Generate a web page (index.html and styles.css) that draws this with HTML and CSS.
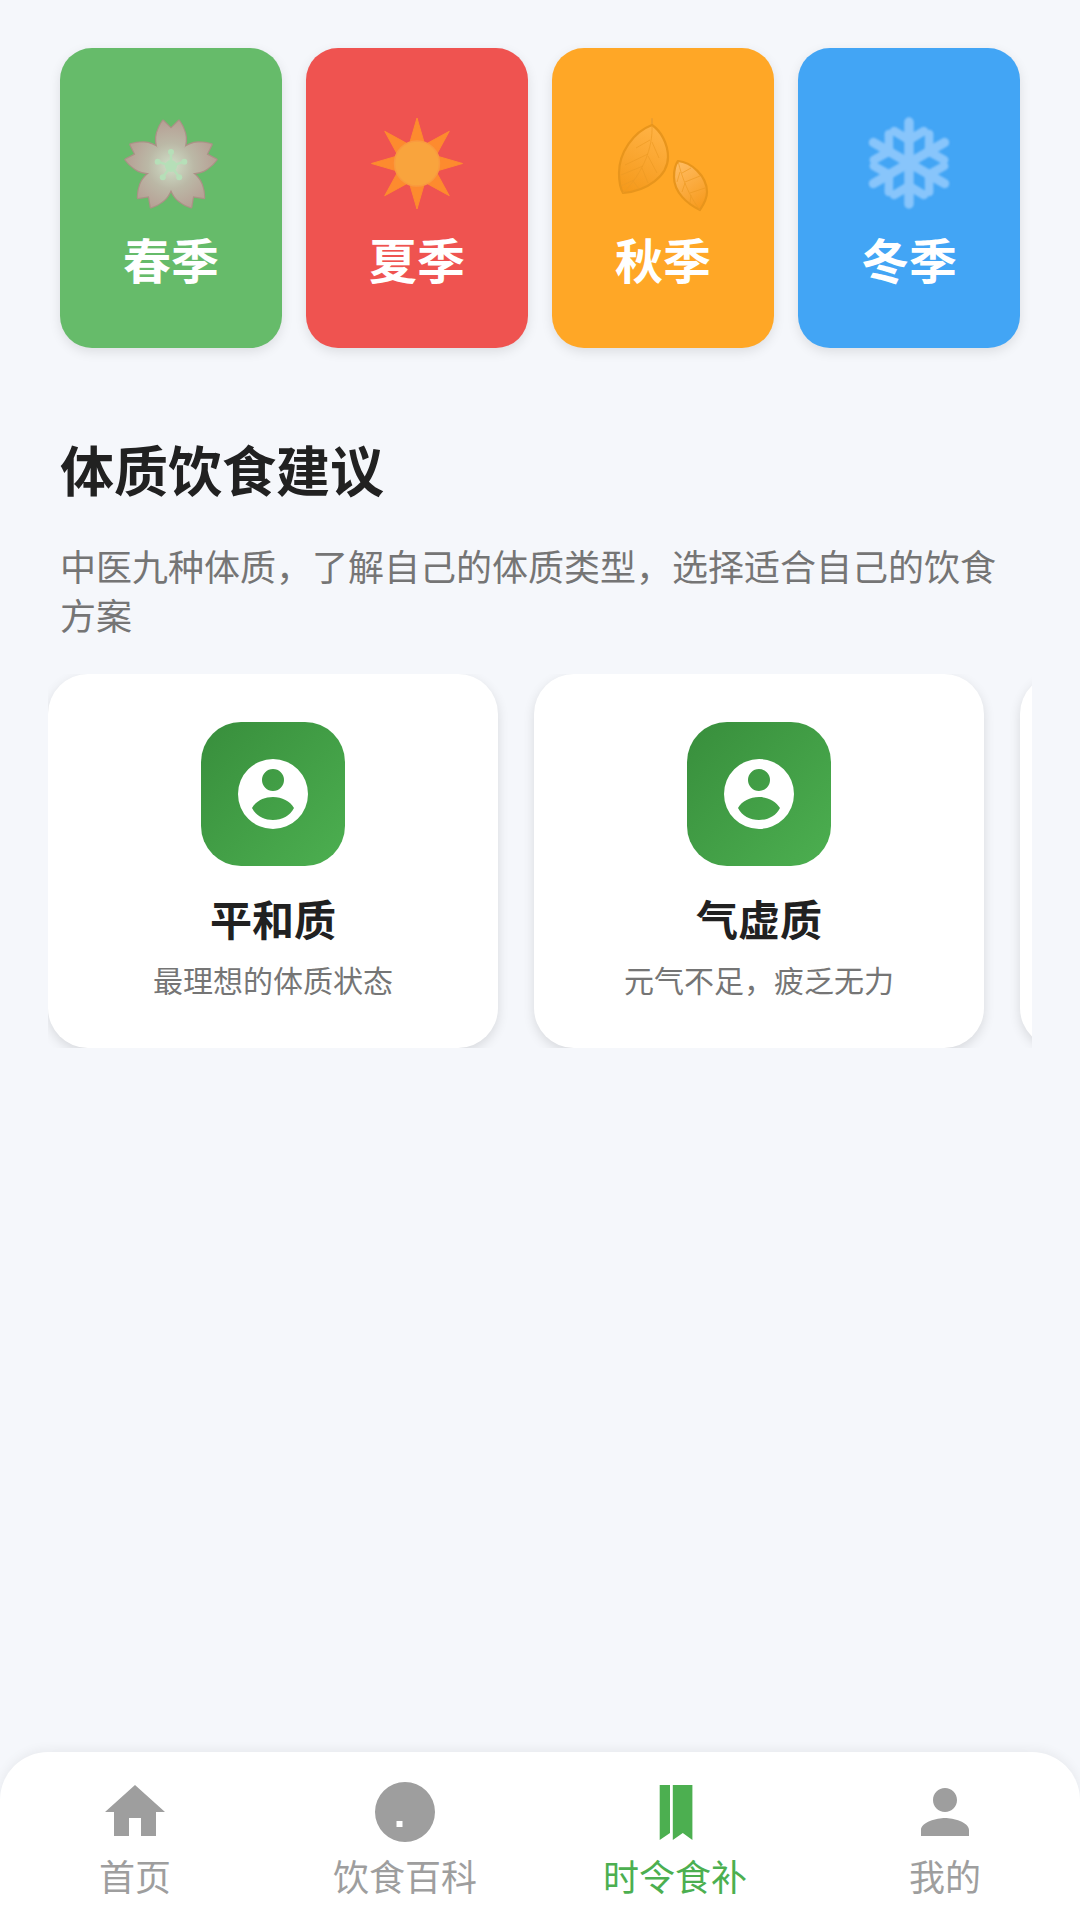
FILE: index.html
```html
<!DOCTYPE html>
<html lang="zh-CN">
<head>
<meta charset="utf-8">
<title>时令食补</title>
<link rel="stylesheet" href="styles.css">
</head>
<body>
<main class="content">
  <section class="seasons">
    <div class="season season-spring">
      <svg class="season-icon" viewBox="-48 -48 96 96" aria-hidden="true">
        <defs>
          <radialGradient id="petal" gradientUnits="userSpaceOnUse" cx="0" cy="0" r="46">
            <stop offset="0" stop-color="#cfe0c8"/><stop offset="0.5" stop-color="#bbb8a6"/><stop offset="1" stop-color="#b69f94"/>
          </radialGradient>
          <path id="p" d="M0 0L-12.5 -15.5C-15 -21 -15.5 -28 -14 -33C-12.5 -38 -10.5 -42 -8 -45.3L0 -37.5L8 -45.3C10.5 -42 12.5 -38 14 -33C15.5 -28 15 -21 12.5 -15.5Z"/>
        </defs>
        <g class="petal-edges">
          <use href="#p"/><use href="#p" transform="rotate(72)"/><use href="#p" transform="rotate(144)"/><use href="#p" transform="rotate(216)"/><use href="#p" transform="rotate(288)"/>
        </g>
        <g class="petals">
          <use href="#p"/><use href="#p" transform="rotate(72)"/><use href="#p" transform="rotate(144)"/><use href="#p" transform="rotate(216)"/><use href="#p" transform="rotate(288)"/>
        </g>
        <g class="stamens">
          <path d="M0 0L0 -14M0 0L13.3 -4.3M0 0L8.2 11.3M0 0L-8.2 11.3M0 0L-13.3 -4.3"/>
          <circle r="6"/><circle cy="-14" r="3"/><circle cx="13.3" cy="-4.3" r="3"/><circle cx="8.2" cy="11.3" r="3"/><circle cx="-8.2" cy="11.3" r="3"/><circle cx="-13.3" cy="-4.3" r="3"/>
        </g>
      </svg>
      <span class="season-name">春季</span>
    </div>
    <div class="season season-summer">
      <svg class="season-icon" viewBox="-48 -45.5 96 96" aria-hidden="true">
        <g class="rays">
          <path d="M-8 -18L0 -45.5L8 -18Z"/>
          <path d="M-8 -18L0 -45.5L8 -18Z" transform="rotate(45)"/>
          <path d="M-8 -18L0 -45.5L8 -18Z" transform="rotate(90)"/>
          <path d="M-8 -18L0 -45.5L8 -18Z" transform="rotate(135)"/>
          <path d="M-8 -18L0 -45.5L8 -18Z" transform="rotate(180)"/>
          <path d="M-8 -18L0 -45.5L8 -18Z" transform="rotate(225)"/>
          <path d="M-8 -18L0 -45.5L8 -18Z" transform="rotate(270)"/>
          <path d="M-8 -18L0 -45.5L8 -18Z" transform="rotate(315)"/>
        </g>
        <circle class="sun-disc" r="22.5"/>
      </svg>
      <span class="season-name">夏季</span>
    </div>
    <div class="season season-autumn">
      <svg class="season-icon" viewBox="0 0 96 96" aria-hidden="true">
        <defs>
          <linearGradient id="leaf-a" x1="0.6" y1="0" x2="0.3" y2="1"><stop offset="0" stop-color="#ffb244"/><stop offset="1" stop-color="#f59a1c"/></linearGradient>
          <linearGradient id="leaf-b" x1="0.2" y1="0" x2="0.7" y2="1"><stop offset="0" stop-color="#ffbc62"/><stop offset="1" stop-color="#f79b1e"/></linearGradient>
        </defs>
        <path class="leaf-stem" d="M37 8V1"/>
        <path class="leaf leaf-big" d="M37 7C46 13 53 26 53 39C53 58 32 73 8 75C4 68 4 60 4 55C4 35 18 14 37 7Z"/>
        <path class="leaf-vein" d="M37 7C38 30 28 55 8 75M35 22L21 30M33 36L10 47M28 48L6 57M19 62L6 68M37 24L44 40M33 38L42 55M27 50L33 65M18 63L24 71"/>
        <path class="leaf leaf-small" d="M63 43C76 44 92 58 92 74C92 80 89 86 85 92C72 86 59 74 59 59C59 52 60 47 63 43Z"/>
        <path class="leaf-vein" d="M63 43C67 60 74 78 85 92M67 55L76 50M70 64L85 58M75 75L90 70M65 54L62 64M70 65L67 74M76 77L75 85"/>
      </svg>
      <span class="season-name">秋季</span>
    </div>
    <div class="season season-winter">
      <svg class="season-icon" viewBox="-48 -45 96 96" aria-hidden="true">
        <g class="flake">
          <g><path d="M0 0V-41"/><path class="branch" d="M0 -23L-15 -32M0 -23L15 -32"/></g>
          <g transform="rotate(60)"><path d="M0 0V-41"/><path class="branch" d="M0 -23L-15 -32M0 -23L15 -32"/></g>
          <g transform="rotate(120)"><path d="M0 0V-41"/><path class="branch" d="M0 -23L-15 -32M0 -23L15 -32"/></g>
          <g transform="rotate(180)"><path d="M0 0V-41"/><path class="branch" d="M0 -23L-15 -32M0 -23L15 -32"/></g>
          <g transform="rotate(240)"><path d="M0 0V-41"/><path class="branch" d="M0 -23L-15 -32M0 -23L15 -32"/></g>
          <g transform="rotate(300)"><path d="M0 0V-41"/><path class="branch" d="M0 -23L-15 -32M0 -23L15 -32"/></g>
        </g>
      </svg>
      <span class="season-name">冬季</span>
    </div>
  </section>

  <section class="advice">
    <h2 class="advice-title">体质饮食建议</h2>
    <p class="advice-desc">中医九种体质，了解自己的体质类型，选择适合自己的饮食方案</p>
  </section>

  <section class="types">
    <article class="type-card">
      <div class="type-icon">
        <svg viewBox="0 0 70 70" aria-hidden="true">
          <path class="type-glyph" fill-rule="evenodd" d="M35 0A35 35 0 1 0 35 70A35 35 0 1 0 35 0ZM35 10A11 11 0 1 1 35 32A11 11 0 1 1 35 10ZM14 49C18 42 26 38 35 38C44 38 52 42 56 49C52 57 44 61 35 61C26 61 18 57 14 49Z"/>
        </svg>
      </div>
      <h3 class="type-name">平和质</h3>
      <p class="type-desc">最理想的体质状态</p>
    </article>
    <article class="type-card">
      <div class="type-icon">
        <svg viewBox="0 0 70 70" aria-hidden="true">
          <path class="type-glyph" fill-rule="evenodd" d="M35 0A35 35 0 1 0 35 70A35 35 0 1 0 35 0ZM35 10A11 11 0 1 1 35 32A11 11 0 1 1 35 10ZM14 49C18 42 26 38 35 38C44 38 52 42 56 49C52 57 44 61 35 61C26 61 18 57 14 49Z"/>
        </svg>
      </div>
      <h3 class="type-name">气虚质</h3>
      <p class="type-desc">元气不足，疲乏无力</p>
    </article>
    <article class="type-card"></article>
  </section>
</main>

<nav class="tabbar">
  <a class="tab">
    <svg class="tab-icon" viewBox="0 0 24 24" aria-hidden="true"><path d="M10 20v-6h4v6h5v-8h3L12 3 2 12h3v8z"/></svg>
    <span class="tab-label">首页</span>
  </a>
  <a class="tab">
    <svg class="tab-icon" viewBox="0 0 72 72" aria-hidden="true"><path fill-rule="evenodd" d="M36 6A30 30 0 1 0 36 66A30 30 0 1 0 36 6ZM27.5 45V51H33.5V45Z"/></svg>
    <span class="tab-label">饮食百科</span>
  </a>
  <a class="tab tab-active">
    <svg class="tab-icon" viewBox="0 0 72 72" aria-hidden="true"><path d="M20.7 9H31V57L20.7 64ZM33.8 9H53.4V64L43.8 57L33.8 64Z"/></svg>
    <span class="tab-label">时令食补</span>
  </a>
  <a class="tab">
    <svg class="tab-icon" viewBox="0 0 24 24" aria-hidden="true"><path d="M12 12c2.21 0 4-1.79 4-4s-1.79-4-4-4-4 1.79-4 4 1.79 4 4 4zm0 2c-2.67 0-8 1.34-8 4v2h16v-2c0-2.66-5.33-4-8-4z"/></svg>
    <span class="tab-label">我的</span>
  </a>
</nav>
</body>
</html>
```
FILE: styles.css
```css
* { box-sizing: border-box; }

html, body { margin: 0; padding: 0; }

body {
  width: 1080px;
  height: 1920px;
  display: flex;
  flex-direction: column;
  overflow: hidden;
  background: #f5f7fb;
  font-family: "Noto Sans CJK SC", "Noto Sans", sans-serif;
}

.content { flex: 1; min-height: 0; }

/* seasons */
.seasons {
  display: flex;
  gap: 24px;
  padding: 48px 60px 0;
}

.season {
  width: 222px;
  height: 300px;
  padding-top: 70px;
  border-radius: 32px;
  display: flex;
  flex-direction: column;
  align-items: center;
  box-shadow: 0 4px 12px rgba(0, 0, 0, 0.1);
}

.season-spring { background: #66bb6a; }
.season-summer { background: #ef5350; }
.season-autumn { background: #ffa726; }
.season-winter { background: #42a5f5; }

.season-icon {
  display: block;
  width: 96px;
  height: 96px;
  overflow: visible;
  flex: none;
}

.season-name {
  margin-top: 16px;
  font-size: 48px;
  line-height: 56px;
  font-weight: 700;
  color: #fff;
}

.petal-edges use { fill: #ab9186; stroke: #ab9186; stroke-width: 2.4; stroke-linejoin: round; }
.petals use { fill: url(#petal); }
.stamens { fill: #b6dfb8; }
.stamens path { stroke: #b6dfb8; stroke-width: 2.4; fill: none; }

.rays path { fill: #fd8b2e; stroke: #fd8b2e; stroke-width: 1; stroke-linejoin: round; }
.sun-disc { fill: #f9a43d; stroke: #f99a3f; stroke-width: 1.5; }

.leaf { stroke: #e8951c; stroke-width: 2.2; stroke-linejoin: round; }
.leaf-big { fill: url(#leaf-a); }
.leaf-small { fill: url(#leaf-b); }
.leaf-stem { stroke: #ee9e2c; stroke-width: 2; stroke-linecap: round; fill: none; }
.leaf-vein { stroke: #ec9a24; stroke-width: 1; fill: none; opacity: 0.7; }

.flake { filter: blur(0.8px); }
.flake path { stroke: #88c5fb; stroke-width: 9.5; stroke-linecap: round; fill: none; }
.flake .branch { stroke-width: 8.5; }

/* advice */
.advice { padding: 89px 60px 0; }

.advice-title {
  margin: 0;
  font-size: 54px;
  line-height: 64px;
  font-weight: 700;
  color: #212121;
}

.advice-desc {
  margin: 40px 0 0;
  font-size: 36px;
  line-height: 49px;
  color: #757575;
}

/* types */
.types {
  display: flex;
  gap: 36px;
  margin: 35px 48px 0;
  overflow: hidden;
}

.type-card {
  flex: none;
  width: 450px;
  height: 374px;
  padding-top: 48px;
  border-radius: 40px;
  background: #fff;
  display: flex;
  flex-direction: column;
  align-items: center;
  box-shadow: 0 4px 12px rgba(0, 0, 0, 0.12);
}

.type-icon {
  width: 144px;
  height: 144px;
  border-radius: 40px;
  background: linear-gradient(135deg, #388e3c, #4caf50);
  display: flex;
  align-items: center;
  justify-content: center;
}

.type-icon svg { display: block; width: 70px; height: 70px; }
.type-glyph { fill: #fff; }

.type-name {
  margin: 24px 0 0;
  font-size: 42px;
  line-height: 56px;
  font-weight: 700;
  color: #212121;
}

.type-desc {
  margin: 13px 0 0;
  font-size: 30px;
  line-height: 40px;
  color: #757575;
}

/* tab bar */
.tabbar {
  flex: none;
  height: 168px;
  padding-top: 24px;
  border-radius: 48px 48px 0 0;
  background: #fff;
  box-shadow: 0 -2px 12px rgba(0, 0, 0, 0.06);
  display: grid;
  grid-template-columns: repeat(4, 1fr);
}

.tab {
  display: flex;
  flex-direction: column;
  align-items: center;
  color: #9e9e9e;
}

.tab-icon { display: block; width: 72px; height: 72px; fill: #9e9e9e; }

.tab-label {
  margin-top: 5px;
  font-size: 36px;
  line-height: 44px;
}

.tab-active { color: #4caf50; }
.tab-active .tab-icon { fill: #4caf50; }
```
